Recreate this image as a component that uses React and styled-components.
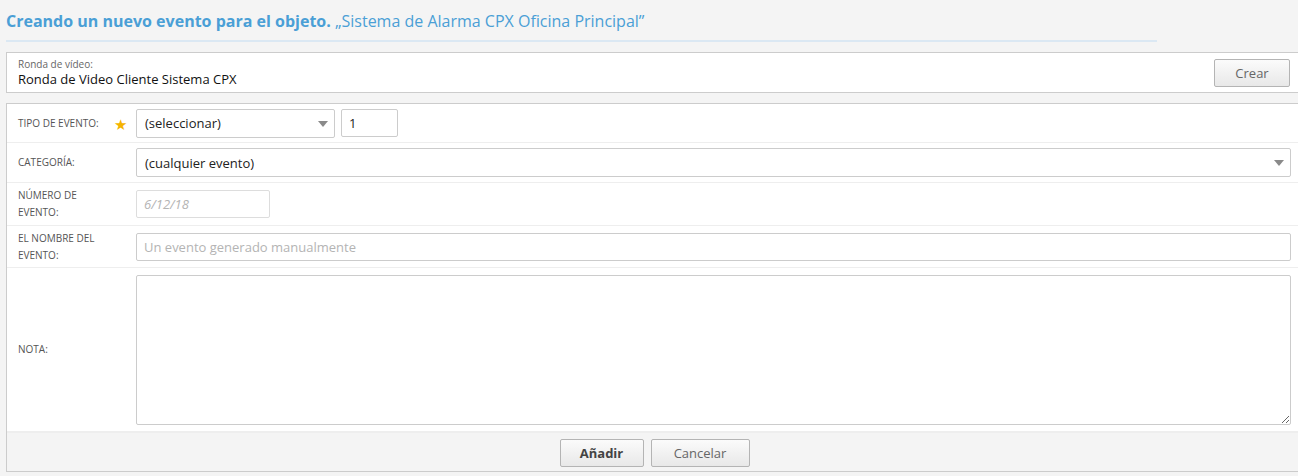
import styled, { createGlobalStyle } from "styled-components";

const GlobalStyle = createGlobalStyle`
  html, body {
    margin: 0;
    padding: 0;
    background: #f4f4f4;
    overflow: hidden;
  }
  body {
    font-family: "Open Sans", "Liberation Sans", sans-serif;
    color: #333;
  }
`;

const Page = styled.div`
  padding: 0 0 0 6px;
  width: 1296px;
`;

const Header = styled.div`
  width: 1151px;
  height: 42px;
  padding-top: 10px;
  box-sizing: border-box;
  border-bottom: 2px solid #dbe8f3;
  margin-bottom: 10px;
`;

const Title = styled.h1`
  margin: 0;
  font-size: 16px;
  line-height: 22px;
  font-weight: normal;
  color: #4a9fd6;
  white-space: nowrap;

  b {
    font-weight: 700;
  }
`;

const RondaBox = styled.div`
  display: flex;
  align-items: center;
  justify-content: space-between;
  height: 41px;
  box-sizing: border-box;
  background: #fff;
  border: 1px solid #cccccc;
  padding: 0 11px;
  margin-bottom: 10px;
`;

const RondaText = styled.div`
  display: flex;
  flex-direction: column;
`;

const SmallLabel = styled.span`
  font-size: 10px;
  line-height: 12px;
  color: #666;
`;

const RondaValue = styled.span`
  font-size: 13px;
  line-height: 18px;
  color: #111;
`;

const Button = styled.button`
  font-family: "Open Sans", "Liberation Sans", sans-serif;
  height: 28px;
  min-width: ${p => p.$width || 76}px;
  padding: 0 14px;
  font-size: 13px;
  font-weight: ${p => (p.$primary ? 700 : 400)};
  color: ${p => (p.$primary ? "#444" : "#666")};
  background: linear-gradient(#fbfbfb, #e8e8e8);
  border: 1px solid #b4b4b4;
  border-radius: 2px;
  cursor: pointer;
`;

const Panel = styled.div`
  background: #fff;
  border: 1px solid #cccccc;
  border-right: none;
`;

const Row = styled.div`
  display: flex;
  align-items: center;
  min-height: ${p => p.$height}px;
  box-sizing: border-box;
  padding-right: 11px;
  border-bottom: 1px solid #eeeeee;
`;

const Label = styled.div`
  position: relative;
  width: 129px;
  flex-shrink: 0;
  box-sizing: border-box;
  padding-left: 11px;
  padding-right: 32px;
  font-size: 10px;
  line-height: 17px;
  text-transform: uppercase;
  color: #555;
`;

const Star = styled.span`
  position: absolute;
  right: 9px;
  top: 1px;
  color: #f5b400;
  font-size: 15px;
  line-height: 17px;
`;

const Field = styled.div`
  display: flex;
  gap: 6px;
  flex: ${p => (p.$grow ? 1 : "0 0 auto")};
`;

const SelectBox = styled.div`
  position: relative;
  display: flex;
  align-items: center;
  width: ${p => (p.$width ? `${p.$width}px` : "100%")};
  height: 29px;
  box-sizing: border-box;
  padding: 0 8px;
  font-size: 13px;
  color: #222;
  background: #fff;
  border: 1px solid #cccccc;
  border-radius: 2px;

  &::after {
    content: "";
    position: absolute;
    right: 6px;
    top: 11px;
    border-left: 5px solid transparent;
    border-right: 5px solid transparent;
    border-top: 6px solid #8a8a8a;
  }
`;

const Input = styled.input`
  font-family: "Open Sans", "Liberation Sans", sans-serif;
  width: ${p => (p.$width ? `${p.$width}px` : "100%")};
  height: ${p => p.$h || 29}px;
  box-sizing: border-box;
  padding: 0 7px;
  font-size: 13px;
  font-style: ${p => (p.$italic ? "italic" : "normal")};
  color: #222;
  background: #fff;
  border: 1px solid ${p => (p.$light ? "#dddddd" : "#cccccc")};
  border-radius: 2px;
  outline: none;

  &::placeholder {
    color: #b4b4b4;
  }
`;

const TextArea = styled.textarea`
  width: 100%;
  height: 150px;
  box-sizing: border-box;
  border: 1px solid #cccccc;
  border-radius: 2px;
  resize: vertical;
  display: block;
  outline: none;
`;

const Footer = styled.div`
  display: flex;
  justify-content: center;
  gap: 7px;
  height: 39px;
  padding-top: 6px;
  box-sizing: border-box;
  background: #f4f4f4;
  border-top: 1px solid #eeeeee;
`;

export default function App() {
  return (
    <>
      <GlobalStyle />
      <Page>
        <Header>
          <Title>
            <b>Creando un nuevo evento para el objeto.</b> „Sistema de Alarma CPX Oficina Principal”
          </Title>
        </Header>

        <RondaBox>
          <RondaText>
            <SmallLabel>Ronda de vídeo:</SmallLabel>
            <RondaValue>Ronda de Video Cliente Sistema CPX</RondaValue>
          </RondaText>
          <Button>Crear</Button>
        </RondaBox>

        <Panel>
          <Row $height={39}>
            <Label>
              Tipo de evento:
              <Star>★</Star>
            </Label>
            <Field>
              <SelectBox $width={199}>(seleccionar)</SelectBox>
              <Input $width={57} $h={28} defaultValue="1" />
            </Field>
          </Row>

          <Row $height={40}>
            <Label>Categoría:</Label>
            <Field $grow>
              <SelectBox>(cualquier evento)</SelectBox>
            </Field>
          </Row>

          <Row $height={43}>
            <Label>Número de evento:</Label>
            <Field>
              <Input $width={134} $h={28} $italic $light placeholder="6/12/18" />
            </Field>
          </Row>

          <Row $height={42}>
            <Label>El nombre del evento:</Label>
            <Field $grow>
              <Input $h={28} placeholder="Un evento generado manualmente" />
            </Field>
          </Row>

          <Row $height={164}>
            <Label>Nota:</Label>
            <Field $grow>
              <TextArea />
            </Field>
          </Row>

          <Footer>
            <Button $primary $width={84}>Añadir</Button>
            <Button $width={99}>Cancelar</Button>
          </Footer>
        </Panel>
      </Page>
    </>
  );
}
